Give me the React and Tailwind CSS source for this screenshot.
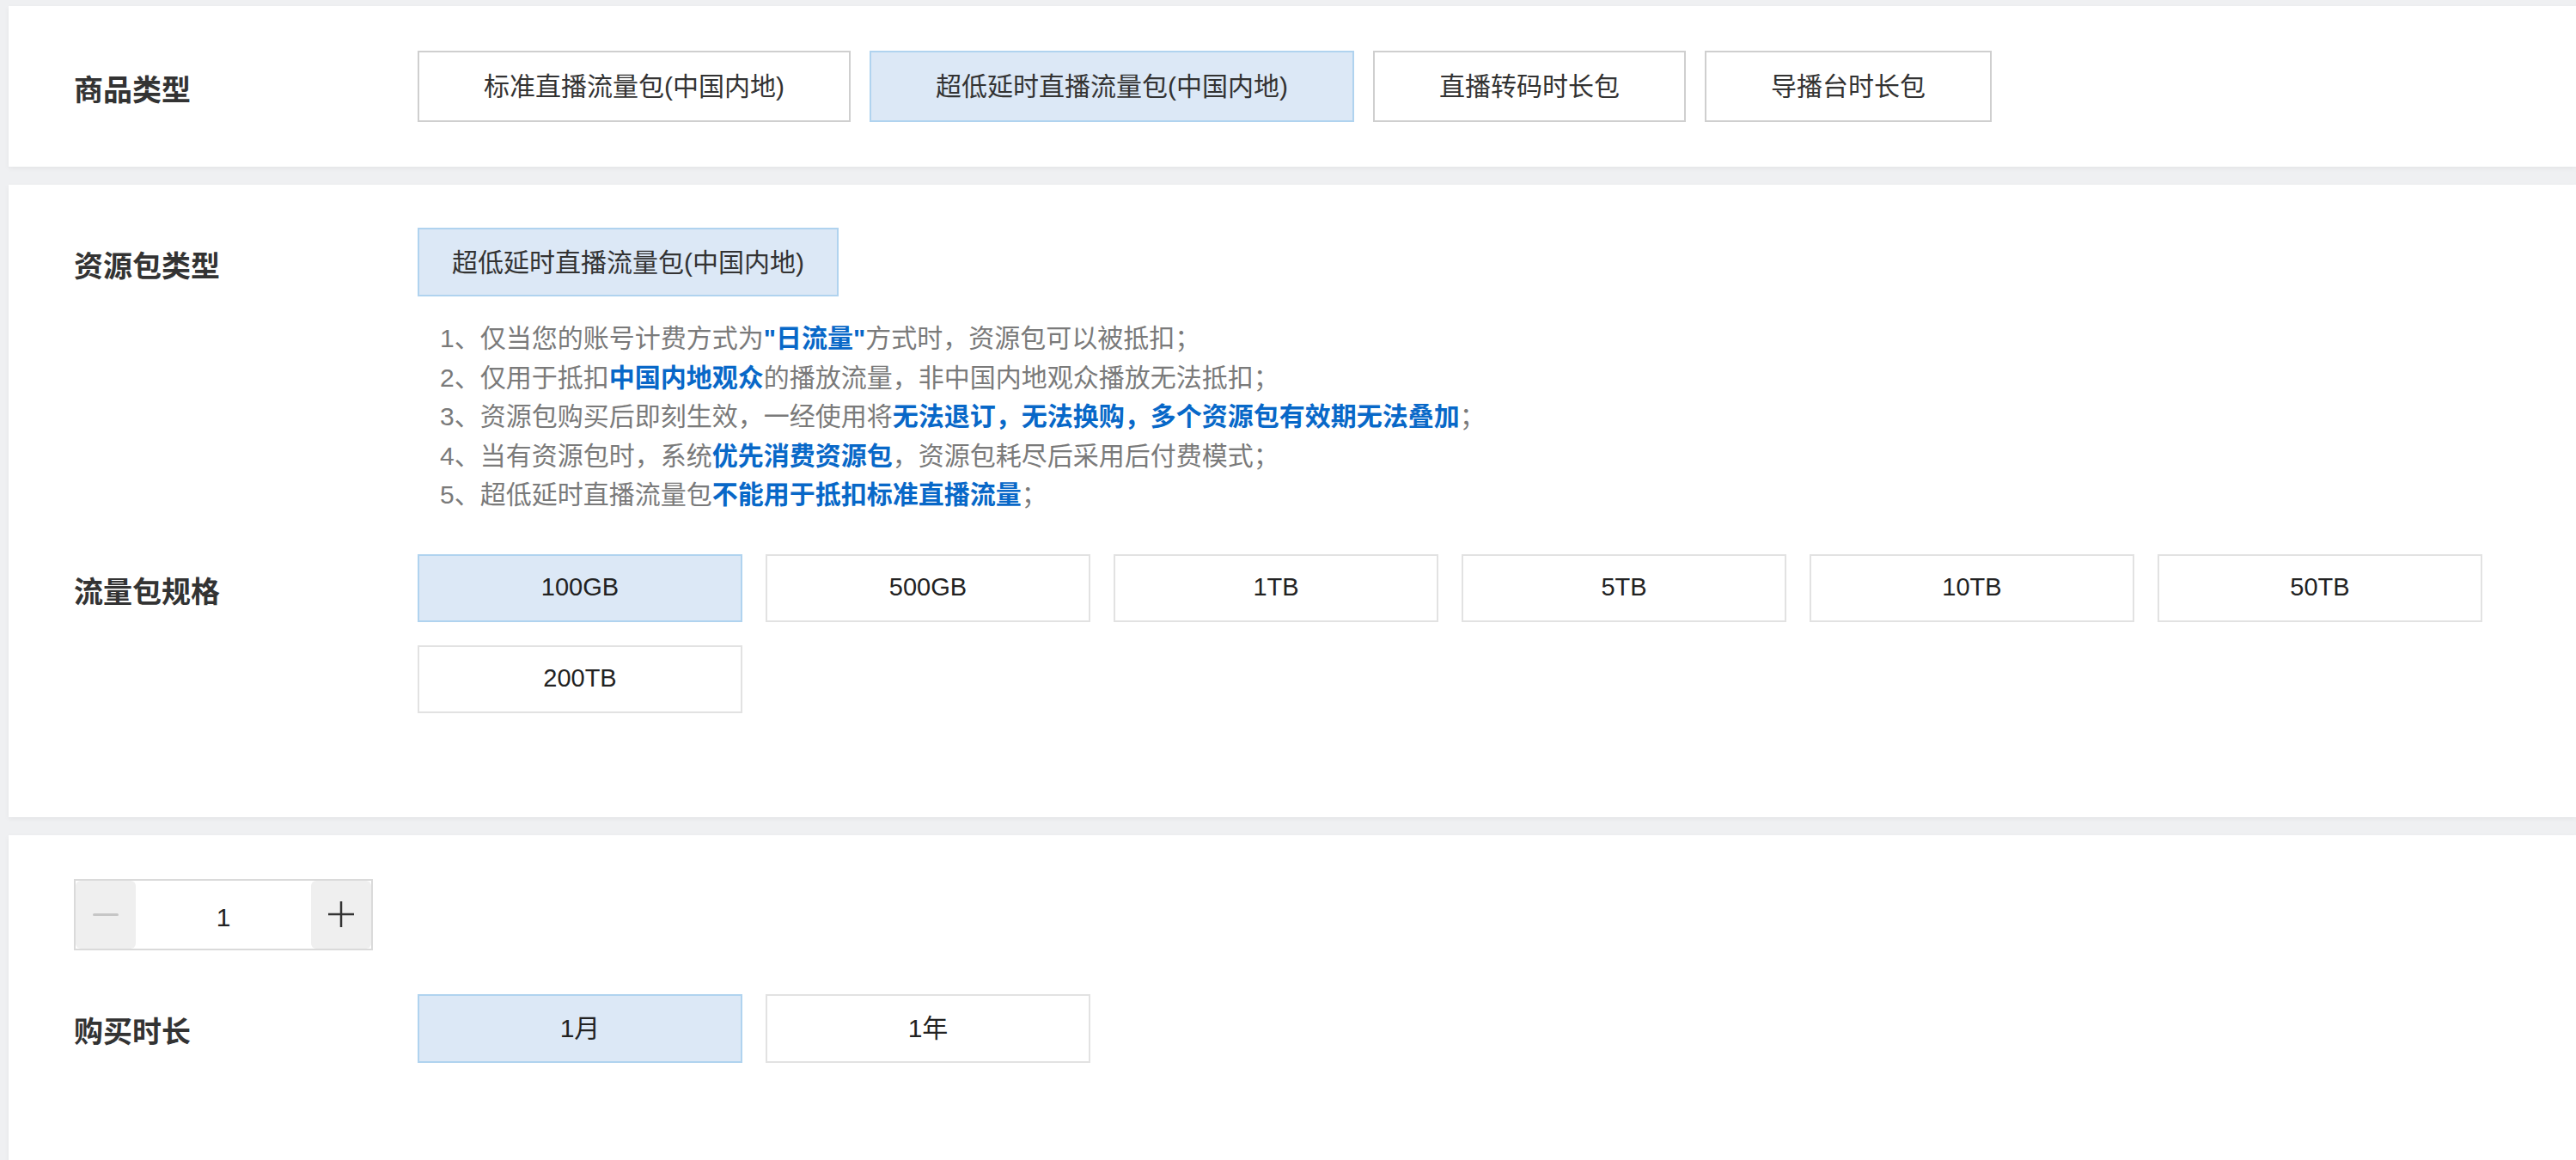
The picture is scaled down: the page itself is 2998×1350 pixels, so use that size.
import React, { useState } from "react";

const FONT = "font-['Liberation_Sans','Noto_Sans_CJK_SC',sans-serif]";

const productTypes = [
  "标准直播流量包(中国内地)",
  "超低延时直播流量包(中国内地)",
  "直播转码时长包",
  "导播台时长包",
];

const specs = ["100GB", "500GB", "1TB", "5TB", "10TB", "50TB", "200TB"];
const durations = ["1月", "1年"];

const Label = ({ children }) => (
  <div className="w-[400px] shrink-0 h-[80px] flex items-center pt-[10px] text-[34px] font-bold text-[#333]">
    {children}
  </div>
);

const Blue = ({ children }) => (
  <span className="text-[#0868c8] font-bold">{children}</span>
);

const Card = ({ className, children }) => (
  <div className={"bg-white shadow-[0_2px_6px_rgba(0,0,0,0.05)] pl-[76px] pr-[76px] " + className}>
    {children}
  </div>
);

export default function App() {
  const [product, setProduct] = useState(1);
  const [spec, setSpec] = useState(0);
  const [duration, setDuration] = useState(0);
  const [count, setCount] = useState(1);

  return (
    <div className={`${FONT} min-h-[1350px] bg-[#eff0f2] pl-[10px] pt-[7px] flex flex-col gap-[21px]`}>
      {/* product type */}
      <Card className="py-[52px] flex items-center">
        <Label>商品类型</Label>
        <div className="flex gap-[22px]">
          {productTypes.map((p, i) => (
            <button
              key={p}
              type="button"
              onClick={() => setProduct(i)}
              className={
                "h-[83px] px-[75px] border-2 text-[30px] text-[#333] " +
                (product === i
                  ? "bg-[#dce8f6] border-[#b0d3ef]"
                  : "bg-white border-[#cfcfcf]")
              }
            >
              {p}
            </button>
          ))}
        </div>
      </Card>

      {/* resource package */}
      <Card className="pt-[50px] pb-[121px]">
        <div className="flex items-start">
          <Label>资源包类型</Label>
          <div className="flex flex-col">
            <div className="self-start h-[80px] px-[38px] flex items-center bg-[#dce8f6] border-2 border-[#b0d3ef] text-[30px] text-[#333]">
              超低延时直播流量包(中国内地)
            </div>
            <div className="mt-[26px] ml-[26px] text-[30px] leading-[45.5px] text-[#7a7a7a]">
              <p>
                1、仅当您的账号计费方式为<Blue>"日流量"</Blue>方式时，资源包可以被抵扣；
              </p>
              <p>
                2、仅用于抵扣<Blue>中国内地观众</Blue>的播放流量，非中国内地观众播放无法抵扣；
              </p>
              <p>
                3、资源包购买后即刻生效，一经使用将<Blue>无法退订，无法换购，多个资源包有效期无法叠加</Blue>；
              </p>
              <p>
                4、当有资源包时，系统<Blue>优先消费资源包</Blue>，资源包耗尽后采用后付费模式；
              </p>
              <p>
                5、超低延时直播流量包<Blue>不能用于抵扣标准直播流量</Blue>；
              </p>
            </div>
          </div>
        </div>

        <div className="flex items-start mt-[46px]">
          <Label>流量包规格</Label>
          <div className="flex-1 flex flex-wrap gap-[27px]">
            {specs.map((s, i) => (
              <button
                key={s}
                type="button"
                onClick={() => setSpec(i)}
                className={
                  "w-[378px] h-[79px] border-2 text-[29px] text-[#222] " +
                  (spec === i
                    ? "bg-[#dce8f6] border-[#b0d3ef]"
                    : "bg-white border-[#e2e2e2]")
                }
              >
                {s}
              </button>
            ))}
          </div>
        </div>
      </Card>

      {/* quantity + duration */}
      <Card className="pt-[51px] pb-[120px] flex-1">
        <div className="w-[348px] h-[83px] border-2 border-[#dadada] flex">
          <button
            type="button"
            onClick={() => setCount(Math.max(1, count - 1))}
            className="w-[70px] h-full bg-[#efefef] rounded-[6px] flex items-center justify-center"
          >
            <span className="block w-[30px] h-[3px] rounded bg-[#c6c6c6]" />
          </button>
          <div className="flex-1 flex items-center justify-center text-[30px] text-[#222] pt-[6px]">
            {count}
          </div>
          <button
            type="button"
            onClick={() => setCount(count + 1)}
            className="w-[70px] h-full bg-[#efefef] rounded-[6px] flex items-center justify-center"
          >
            <svg width="30" height="30" viewBox="0 0 30 30">
              <path d="M15 0v30M0 15h30" stroke="#333" strokeWidth="2.5" />
            </svg>
          </button>
        </div>

        <div className="flex items-start mt-[51px]">
          <Label>购买时长</Label>
          <div className="flex gap-[27px]">
            {durations.map((d, i) => (
              <button
                key={d}
                type="button"
                onClick={() => setDuration(i)}
                className={
                  "w-[378px] h-[80px] border-2 text-[30px] text-[#222] " +
                  (duration === i
                    ? "bg-[#dce8f6] border-[#b0d3ef]"
                    : "bg-white border-[#e2e2e2]")
                }
              >
                {d}
              </button>
            ))}
          </div>
        </div>
      </Card>
    </div>
  );
}
